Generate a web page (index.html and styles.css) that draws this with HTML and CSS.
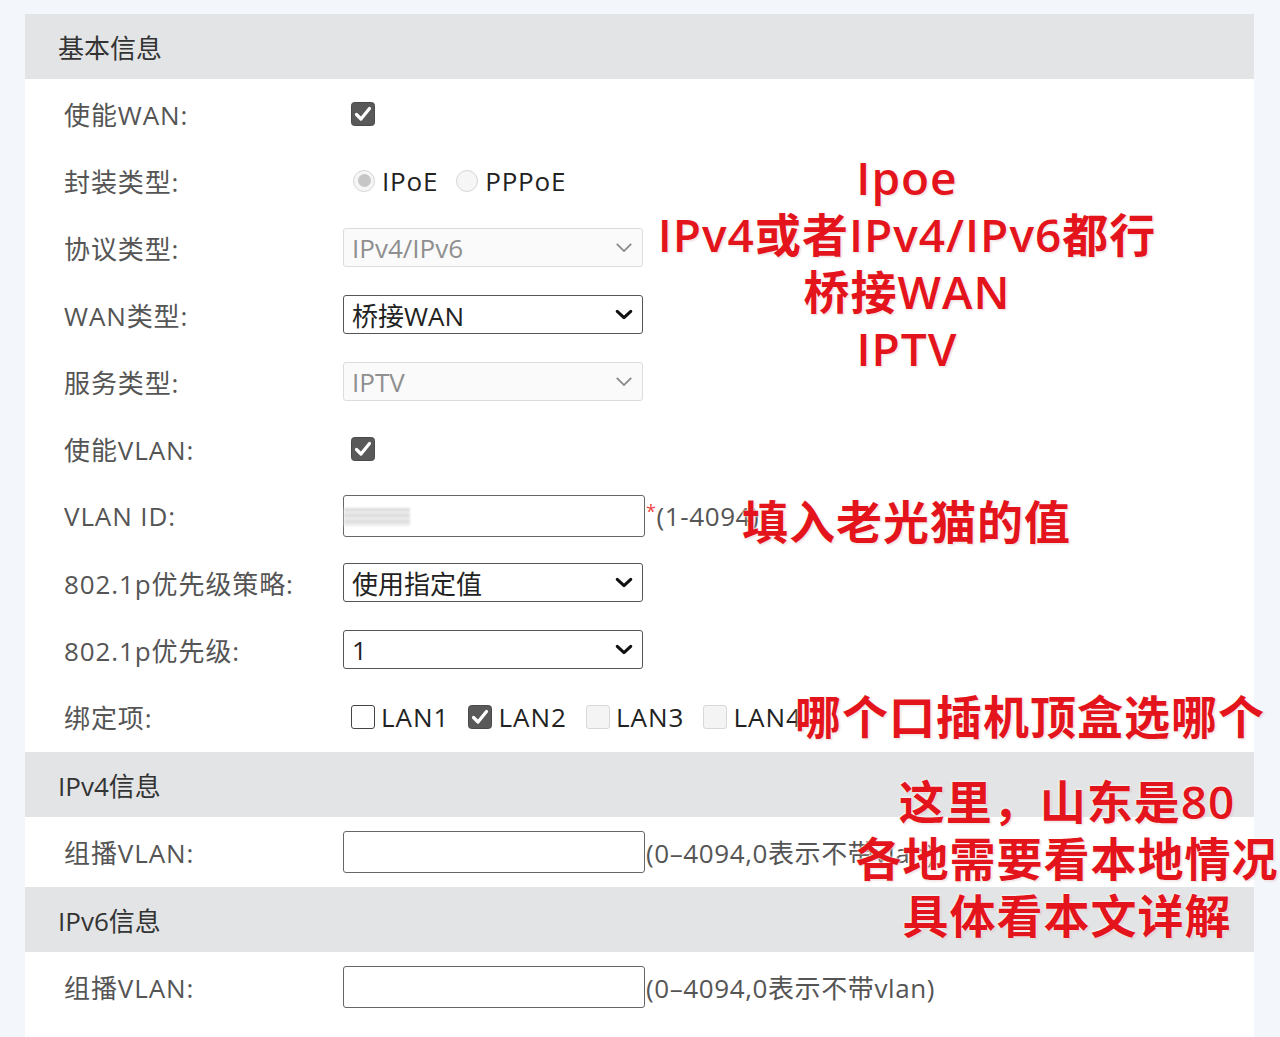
FILE: index.html
```html
<!DOCTYPE html>
<html lang="zh-CN">
<head>
<meta charset="utf-8">
<title>WAN 配置</title>
<link rel="stylesheet" href="styles.css">
</head>
<body>
<div class="page">
  <div class="panel">
    <div class="sec-head">基本信息</div>
    <div class="sec-body">
      <div class="row">
        <div class="label">使能WAN:</div>
        <div class="ctrl"><span class="cb cb-on"><svg viewBox="0 0 24 24" width="24" height="24"><rect x="0.5" y="0.5" width="23" height="23" rx="3" fill="#595959" stroke="#4a4a4a"/><path d="M5.5 12.5 L10 17 L18.5 6.5" fill="none" stroke="#fff" stroke-width="3.2" stroke-linecap="round" stroke-linejoin="round"/></svg></span></div>
      </div>
      <div class="row">
        <div class="label">封装类型:</div>
        <div class="ctrl">
          <span class="radio radio-on"><span class="dot"></span></span><span class="opt">IPoE</span>
          <span class="radio"></span><span class="opt">PPPoE</span>
        </div>
      </div>
      <div class="row">
        <div class="label">协议类型:</div>
        <div class="ctrl"><div class="select disabled"><span>IPv4/IPv6</span><svg class="chev" viewBox="0 0 20 12" width="18" height="11"><path d="M2 2 L10 10 L18 2" fill="none" stroke="#888" stroke-width="2"/></svg></div></div>
      </div>
      <div class="row">
        <div class="label">WAN类型:</div>
        <div class="ctrl"><div class="select"><span>桥接WAN</span><svg class="chev" viewBox="0 0 20 12" width="18" height="11"><path d="M2.5 2.5 L10 9.5 L17.5 2.5" fill="none" stroke="#111" stroke-width="3.4" stroke-linecap="round" stroke-linejoin="round"/></svg></div></div>
      </div>
      <div class="row">
        <div class="label">服务类型:</div>
        <div class="ctrl"><div class="select disabled"><span>IPTV</span><svg class="chev" viewBox="0 0 20 12" width="18" height="11"><path d="M2 2 L10 10 L18 2" fill="none" stroke="#888" stroke-width="2"/></svg></div></div>
      </div>
      <div class="row">
        <div class="label">使能VLAN:</div>
        <div class="ctrl"><span class="cb cb-on"><svg viewBox="0 0 24 24" width="24" height="24"><rect x="0.5" y="0.5" width="23" height="23" rx="3" fill="#595959" stroke="#4a4a4a"/><path d="M5.5 12.5 L10 17 L18.5 6.5" fill="none" stroke="#fff" stroke-width="3.2" stroke-linecap="round" stroke-linejoin="round"/></svg></span></div>
      </div>
      <div class="row">
        <div class="label">VLAN ID:</div>
        <div class="ctrl"><div class="input input-tall"><span class="mask"></span></div><span class="hint"><span class="req">*</span>(1-4094)</span></div>
      </div>
      <div class="row">
        <div class="label">802.1p优先级策略:</div>
        <div class="ctrl"><div class="select"><span>使用指定值</span><svg class="chev" viewBox="0 0 20 12" width="18" height="11"><path d="M2.5 2.5 L10 9.5 L17.5 2.5" fill="none" stroke="#111" stroke-width="3.4" stroke-linecap="round" stroke-linejoin="round"/></svg></div></div>
      </div>
      <div class="row">
        <div class="label">802.1p优先级:</div>
        <div class="ctrl"><div class="select"><span>1</span><svg class="chev" viewBox="0 0 20 12" width="18" height="11"><path d="M2.5 2.5 L10 9.5 L17.5 2.5" fill="none" stroke="#111" stroke-width="3.4" stroke-linecap="round" stroke-linejoin="round"/></svg></div></div>
      </div>
      <div class="row">
        <div class="label">绑定项:</div>
        <div class="ctrl lans">
          <span class="lan"><span class="cb cb-off"></span>LAN1</span>
          <span class="lan"><span class="cb cb-on"><svg viewBox="0 0 24 24" width="24" height="24"><rect x="0.5" y="0.5" width="23" height="23" rx="3" fill="#595959" stroke="#4a4a4a"/><path d="M5.5 12.5 L10 17 L18.5 6.5" fill="none" stroke="#fff" stroke-width="3.2" stroke-linecap="round" stroke-linejoin="round"/></svg></span>LAN2</span>
          <span class="lan"><span class="cb cb-dis"></span>LAN3</span>
          <span class="lan"><span class="cb cb-dis"></span>LAN4</span>
        </div>
      </div>
    </div>

    <div class="sec-head">IPv4信息</div>
    <div class="sec-body">
      <div class="row">
        <div class="label">组播VLAN:</div>
        <div class="ctrl"><div class="input input-tall"></div><span class="hint">(0–4094,0表示不带vlan)</span></div>
      </div>
    </div>

    <div class="sec-head">IPv6信息</div>
    <div class="sec-body">
      <div class="row">
        <div class="label">组播VLAN:</div>
        <div class="ctrl"><div class="input input-tall"></div><span class="hint">(0–4094,0表示不带vlan)</span></div>
      </div>
    </div>
  </div>
</div>

<div class="note note-1">Ipoe<br>IPv4或者IPv4/IPv6都行<br>桥接WAN<br>IPTV</div>
<div class="note note-2">填入老光猫的值</div>
<div class="note note-3">哪个口插机顶盒选哪个</div>
<div class="note note-4">这里，山东是80<br>各地需要看本地情况<br>具体看本文详解</div>
</body>
</html>
```
FILE: styles.css
```css
html, body {
  margin: 0;
  padding: 0;
}
body {
  background: #f3f6fb;
  width: 1280px;
  height: 1037px;
  overflow: hidden;
  position: relative;
  font-family: "Open Sans", "Noto Sans CJK SC", sans-serif;
  color: #555;
}
.page {
  padding: 14px 26px 0 25px;
}
.panel {
  background: #fff;
  height: 1023px;
}
.sec-head {
  height: 65px;
  background: #e3e4e6;
  display: flex;
  align-items: center;
  padding-left: 33px;
  font-size: 26px;
  color: #333;
}
.sec-body {
  padding-top: 1px;
  padding-bottom: 2px;
}
.row {
  display: flex;
  align-items: center;
  height: 67px;
}
.label {
  width: 279px;
  padding-left: 39px;
  font-size: 26px;
  letter-spacing: 0.9px;
  color: #555;
  white-space: nowrap;
}
.ctrl {
  display: flex;
  align-items: center;
  font-size: 26px;
}
.cb {
  display: inline-block;
  width: 24px;
  height: 24px;
  box-sizing: border-box;
  margin-left: 8px;
}
.cb svg { display: block; }
.cb-off {
  border: 1.5px solid #444;
  border-radius: 3px;
  background: #fff;
}
.cb-dis {
  border: 1.5px solid #d8d8d8;
  border-radius: 3px;
  background: #f4f4f4;
}
.radio {
  width: 22px;
  height: 22px;
  box-sizing: border-box;
  border: 1.5px solid #d6d6d6;
  border-radius: 50%;
  background: #f6f6f6;
  margin-left: 10px;
  display: inline-flex;
  align-items: center;
  justify-content: center;
}
.radio-on .dot {
  width: 13px;
  height: 13px;
  border-radius: 50%;
  background: #c6c6c6;
}
.opt {
  margin-left: 7px;
  color: #222;
  letter-spacing: 0.8px;
}
.radio + .opt + .radio { margin-left: 18px; }
.select {
  width: 300px;
  height: 39px;
  box-sizing: border-box;
  border: 1.5px solid #555;
  border-radius: 3px;
  background: #fff;
  display: flex;
  align-items: center;
  justify-content: space-between;
  padding: 0 9px 0 8px;
  color: #222;
  font-size: 26px;
}
.select.disabled {
  border-color: #dcdcdc;
  background: #fafafa;
  color: #8f8f8f;
}
.input {
  width: 302px;
  height: 42px;
  box-sizing: border-box;
  border: 1.5px solid #666;
  border-radius: 3px;
  background: #fff;
  position: relative;
}
.mask {
  position: absolute;
  left: 0;
  top: 12px;
  width: 66px;
  height: 18px;
  background: repeating-linear-gradient(180deg, #dcdcdc 0 3px, #ececec 3px 6px);
  filter: blur(0.8px);
}
.hint {
  font-size: 26px;
  color: #555;
  margin-left: 1px;
  letter-spacing: 0.6px;
  white-space: nowrap;
}
.req {
  color: #e44;
  font-size: 18px;
  vertical-align: 8px;
}
.lan {
  display: inline-flex;
  align-items: center;
  color: #222;
  letter-spacing: 1px;
  margin-right: 11px;
}
.lan .cb { margin-right: 6px; }

.note {
  position: absolute;
  color: #e3141b;
  font-size: 46px;
  font-weight: 600;
  line-height: 57px;
  letter-spacing: 1px;
  white-space: nowrap;
  text-align: center;
  text-shadow: 0 0 2px #fff, 0 0 3px #fff, 1px 1px 2px rgba(120,0,0,0.25);
}
.note-1 {
  left: 640px;
  top: 149px;
  width: 534px;
}
.note-2 {
  left: 742px;
  top: 493px;
  text-align: left;
}
.note-3 {
  left: 795px;
  top: 688px;
  text-align: left;
}
.note-4 {
  left: 846px;
  top: 773px;
  width: 442px;
}
```
